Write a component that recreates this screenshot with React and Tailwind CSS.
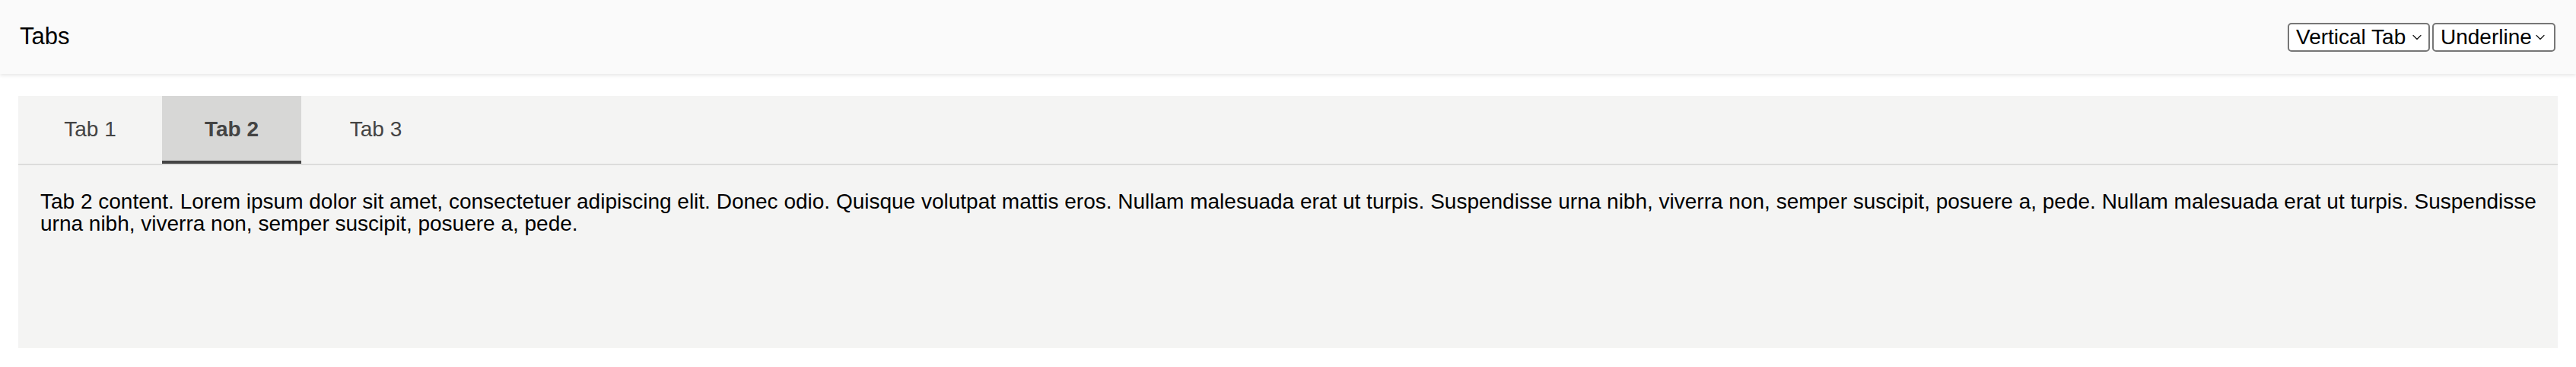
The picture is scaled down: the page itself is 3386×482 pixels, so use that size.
import { useState } from "react";

const tabs = [
  { id: 1, label: "Tab 1", width: "w-[189px]" },
  { id: 2, label: "Tab 2", width: "w-[183px]" },
  { id: 3, label: "Tab 3", width: "w-[196px]" },
];

const lorem =
  "content. Lorem ipsum dolor sit amet, consectetuer adipiscing elit. Donec odio. Quisque volutpat mattis eros. Nullam malesuada erat ut turpis. Suspendisse urna nibh, viverra non, semper suscipit, posuere a, pede. Nullam malesuada erat ut turpis. Suspendisse urna nibh, viverra non, semper suscipit, posuere a, pede.";

function Chevron({ className }) {
  return (
    <svg
      viewBox="0 0 12 8"
      className={"pointer-events-none absolute top-1/2 -translate-y-1/2 w-[12px] h-[8px] " + className}
      fill="none"
      stroke="#111"
      strokeWidth="1.2"
      strokeLinecap="round"
      strokeLinejoin="round"
    >
      <path d="M1 1.5 L6 6.5 L11 1.5" />
    </svg>
  );
}

function Select({ value, onChange, options, width, chevron }) {
  return (
    <div className={"relative " + width}>
      <select
        value={value}
        onChange={(e) => onChange(e.target.value)}
        className="appearance-none w-full h-[38px] pl-[9px] pr-[30px] bg-white border-2 border-[#767676] rounded-[5px] text-[28px] leading-none text-black outline-none"
      >
        {options.map((o) => (
          <option key={o}>{o}</option>
        ))}
      </select>
      <Chevron className={chevron} />
    </div>
  );
}

export default function App() {
  const [active, setActive] = useState(2);
  const [layout, setLayout] = useState("Vertical Tab");
  const [variant, setVariant] = useState("Underline");

  return (
    <div className="min-h-screen bg-white font-['Liberation_Sans',Arial,sans-serif]">
      <header className="h-[97px] bg-[#fafafa] flex items-center justify-between pl-[26px] pr-[27px] shadow-[0_2px_5px_rgba(0,0,0,0.1)] relative">
        <h1 className="text-[31px] text-black">Tabs</h1>
        <div className="flex gap-[3px]">
          <Select
            value={layout}
            onChange={setLayout}
            options={["Vertical Tab", "Horizontal Tab"]}
            width="w-[187px]"
            chevron="right-[11px]"
          />
          <Select
            value={variant}
            onChange={setVariant}
            options={["Underline", "Filled"]}
            width="w-[162px]"
            chevron="right-[14px]"
          />
        </div>
      </header>

      <main className="px-[24px] pt-[29px] pb-[25px]">
        <div className="bg-[#f4f4f3]">
          <div className="flex border-b-2 border-[#dcdcdb]">
            {tabs.map((t) => (
              <button
                key={t.id}
                onClick={() => setActive(t.id)}
                className={
                  "h-[89px] pt-[3px] flex items-center justify-center text-[28px] text-[#444] border-b-4 " +
                  t.width +
                  (active === t.id
                    ? " bg-[#d7d7d6] font-bold border-[#444]"
                    : " border-transparent")
                }
              >
                {t.label}
              </button>
            ))}
          </div>
          <div className="h-[240px] pl-[29px] pr-[20px] pt-[34px] text-[28px] leading-[28.5px] text-black">
            {`Tab ${active} ${lorem}`}
          </div>
        </div>
      </main>
    </div>
  );
}
